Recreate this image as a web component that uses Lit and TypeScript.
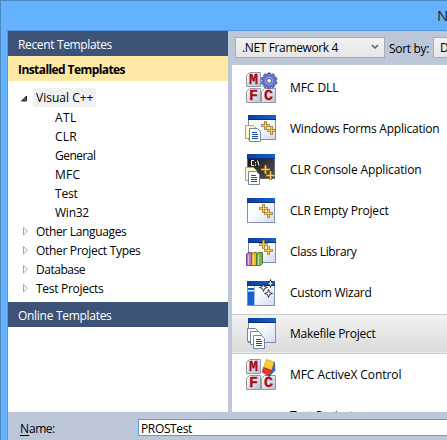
import { LitElement, html, css, svg } from "lit";
import { customElement, property } from "lit/decorators.js";
import { classMap } from "lit/directives/class-map.js";

const sparkle = (x: number, y: number) => svg`
  <path d="M${x} ${y - 4.5}v9M${x - 4.5} ${y}h9" stroke="#96701f" stroke-width="2.6"/>
  <path d="M${x} ${y - 4}v8M${x - 4} ${y}h8" stroke="#fbcb55" stroke-width="1.2"/>`;

const star = (x: number, y: number) => svg`
  <path d="M${x} ${y - 4}l1 3l3 1l-3 1l-1 3l-1-3l-3-1l3-1z" fill="#fff" stroke="#202834" stroke-width=".9"/>`;

const windowFrame = (x: number, y: number, dark = false) => svg`
  <rect x="${x + 0.5}" y="${y + 0.5}" width="27" height="24" fill=${dark ? "url(#night)" : "url(#pane)"} stroke=${dark ? "#666a70" : "#8090ad"}/>
  <rect x=${x} y=${y} width="28" height="5" fill="url(#bar)"/>
  <rect x=${x} y="${y + 4}" width="28" height="1" fill="#0a2f7c"/>`;

const page = (x: number, y: number, lines: boolean, fill = "#fff", edge = "#7486a8") => svg`
  <path d="M${x + 0.5} ${y + 0.5}h8l3 3v10h-11z" fill=${fill} stroke=${edge}/>
  ${lines ? svg`<path d="M${x + 3} ${y + 4.5}h5M${x + 3} ${y + 6.5}h6M${x + 3} ${y + 8.5}h6M${x + 3} ${y + 10.5}h6" stroke="#1b4ea8"/>` : ""}`;

const block = (x: number, y: number, t: string) => svg`
  <path d="M${x + 0.5} ${y + 3.5}l3-3h11v14h-14z" fill="url(#cube)" stroke="#9299a6"/>
  <text x="${x + 7.5}" y="${y + 12}" text-anchor="middle" class="cube-letter">${t}</text>`;

const blocks = svg`${block(1, 0, "M")}${block(1, 16, "F")}${block(16, 16, "C")}`;
const gearTeeth = [0, 36, 72, 108, 144];

const pictures: Record<string, unknown> = {
  dll: svg`${blocks}
    ${gearTeeth.map((a) => svg`<rect x="22.500" y="0.800" width="3.200" height="16" rx=".8" fill="#6474c6" stroke="#424f96" stroke-width=".7" transform="rotate(${a} 24.100 8.800)"/>`)}
    <circle cx="24.100" cy="8.800" r="6" fill="#6474c6"/>
    <circle cx="24.100" cy="8.800" r="4.300" fill="#8796de"/>
    <circle cx="24.100" cy="8.800" r="2.300" fill="#fff" stroke="#424f96" stroke-width=".9"/>`,
  forms: svg`${windowFrame(3, 2)}${page(0, 12, false, "#fff6cc", "#b5a96c")}${page(4, 15, true)}${sparkle(20.5, 12.5)}${sparkle(26.5, 17.5)}`,
  console: svg`${windowFrame(2, 0, true)}
    <path d="M9 6.500H6.500V11.500H9M10.500 8v1.200M10.500 10.500v1.200M12.500 6.500l1.500 5" fill="none" stroke="#fff"/>
    ${page(0, 13, false, "#fff6cc", "#b5a96c")}${page(3, 17, true)}${sparkle(20.5, 15.5)}${sparkle(25.5, 21.5)}`,
  empty: svg`${windowFrame(2, 3)}${sparkle(18.5, 13.5)}${sparkle(23.5, 18.5)}`,
  library: svg`${windowFrame(3, 2)}${sparkle(18.5, 8.5)}${sparkle(23.5, 14.5)}
    <path d="M1.500 18l2-1.500h3v13h-5z" fill="#bd74c8" stroke="#7b4386"/>
    <path d="M6.500 18l2-1.500h3v13h-5z" fill="#e8b52e" stroke="#8b6b1d"/>
    <path d="M11.500 18l2-1.500h4v11l-2 2h-4z" fill="#7db84a" stroke="#4c7a2a"/>
    <path d="M3.500 19v10M8.500 19v10M13.500 19v10" stroke="#fff" opacity=".55"/>`,
  wizard: svg`${windowFrame(2, 4)}<path d="M3 11h6v2H3zM3 14.500h6V28H3z" fill="#1263d2"/>
    <path d="M9.500 9v19" stroke="#a9bbdc"/>${star(18.5, 10.5)}${star(23.5, 16.5)}${star(25.5, 6.5)}`,
  makefile: svg`${windowFrame(3, 0)}${page(2, 10, false)}${page(5, 13, false)}${page(8, 17, true)}`,
  activex: svg`${blocks}
    <path d="M21.500 0.500L29.500 3L27 11.500L18.500 8.500z" fill="#ffce2e" stroke="#b98c12" stroke-width=".6"/>
    <path d="M18.500 8.500L27 11.500L24 17.500L17 13z" fill="#e03a2c" stroke="#962018" stroke-width=".6"/>
    <path d="M29.500 3L30 11.500L24 17.500L27 11.500z" fill="#3f67cf" stroke="#213f94" stroke-width=".6"/>`,
};

@customElement("template-icon")
export class TemplateIcon extends LitElement {
  @property() kind = "";
  static styles = css`
    :host { display: block; flex: none; width: 34px; height: 32px; }
    svg { display: block; overflow: visible; }
    .cube-letter { font: bold 15px "Liberation Mono", monospace; fill: #a80c1a; stroke: #a80c1a; stroke-width: 0.3px; }
  `;
  render() {
    return html`<svg width="34" height="32" viewBox="0 0 34 32">
      <defs>
        <linearGradient id="pane" x2="1" y2="1"><stop stop-color="#fff"/><stop offset=".5" stop-color="#f8fafe"/><stop offset="1" stop-color="#cfdaf0"/></linearGradient>
        <linearGradient id="night" x2="1" y2="1"><stop stop-color="#111"/><stop offset="1" stop-color="#555"/></linearGradient>
        <linearGradient id="bar"><stop stop-color="#0a3d9c"/><stop offset="1" stop-color="#1660d0"/></linearGradient>
        <linearGradient id="cube" x2="1" y2="1"><stop stop-color="#fff"/><stop offset=".4" stop-color="#e4e7ec"/><stop offset="1" stop-color="#b9c0cc"/></linearGradient>
      </defs>${pictures[this.kind]}</svg>`;
  }
}

/** A single line of text, tracked so that it fills the given width. */
@customElement("fit-text")
export class FitText extends LitElement {
  @property() text = "";
  @property({ type: Number }) width = 0;
  static styles = css`
    :host { display: block; white-space: nowrap; }
    span { display: inline-block; }
  `;
  render() {
    return html`<span>${this.text}</span>`;
  }
  firstUpdated() {
    const span = this.renderRoot.querySelector("span")!;
    if (this.width > 0) {
      const spare = this.width - span.getBoundingClientRect().width;
      span.style.letterSpacing = `${spare / this.text.length}px`;
    }
  }
}

const label = (text: string, width: number) => html`<fit-text text=${text} width=${width}></fit-text>`;

const languages: [string, number][] = [["ATL", 21.5], ["CLR", 22], ["General", 40.5], ["MFC", 25.5], ["Test", 22.5], ["Win32", 34]];
const groups: [string, number][] = [["Other Languages", 90.5], ["Other Project Types", 104.5], ["Database", 49], ["Test Projects", 67.5]];
const templates: [string, string, number][] = [
  ["dll", "MFC DLL", 48.5],
  ["forms", "Windows Forms Application", 149.5],
  ["console", "CLR Console Application", 131.5],
  ["empty", "CLR Empty Project", 98.5],
  ["library", "Class Library", 66.5],
  ["wizard", "Custom Wizard", 81.5],
  ["makefile", "Makefile Project", 85.5],
  ["activex", "MFC ActiveX Control", 111.5],
  ["", "Test Project", 64],
];

@customElement("app-root")
export class AppRoot extends LitElement {
  static styles = css`
    :host { display: block; width: 447px; height: 440px; overflow: hidden; font: 12px/18px "Open Sans", "Noto Sans", sans-serif; color: #000; }
    * { box-sizing: border-box; }
    .window { width: 447px; height: 440px; display: flex; flex-direction: column; background: #64b2fd; border: solid #4c88c2; border-width: 1px 0 0 1px; }
    .title { height: 29px; flex: none; display: flex; justify-content: flex-end; align-items: center; padding-bottom: 2px; font-size: 15px; color: #222; overflow: hidden; }
    .title span { width: 10px; white-space: nowrap; }
    .frame { flex: 1; margin-left: 6px; border: solid #5595dc; border-width: 1px 0 0 1px; background: #bcc7d8; display: flex; flex-direction: column; min-height: 0; }
    .columns { height: 381px; flex: none; display: flex; gap: 4px; }
    .tree { width: 220px; flex: none; background: #fff; }
    .head { height: 25px; padding: 5px 0 0 10px; background: #3d5277; color: #fff; }
    .head.open { background: #ffe8a6; color: #000; font-weight: bold; }
    .nodes { padding: 7px 0 5px; }
    .node { height: 19px; display: flex; align-items: center; padding-left: 12px; }
    .node fit-text { padding-top: 2px; }
    .node.leaf { padding-left: 47px; }
    .arrow { width: 16px; flex: none; height: 10px; }
    .root { background: #f0f0f0; height: 19px; padding: 0 2px 0 3px; margin-left: -3px; width: 63px; }
    .root fit-text { padding-top: 1px; }
    .main { flex: 1; min-width: 0; display: flex; flex-direction: column; }
    .tools { height: 34px; flex: none; display: flex; align-items: flex-start; padding: 6px 0 0 3px; overflow: hidden; }
    .combo { height: 21px; width: 150px; flex: none; border: 1px solid #acacac; background: linear-gradient(#f2f2f2, #e6e6e6); display: flex; justify-content: space-between; align-items: center; padding: 1px 5px 0 6px; }
    .combo svg { margin-bottom: 2px; }
    .sort { margin: 3px 5px 0 4px; width: 39px; flex: none; }
    .list { flex: 1; min-height: 0; background: #fff; overflow: hidden; padding-top: 3px; display: flex; flex-direction: column; gap: 1px; }
    .item { height: 40px; flex: none; display: flex; align-items: center; gap: 11px; padding-left: 13px; }
    .item.chosen { background: linear-gradient(#f2f2f2, #dadada); box-shadow: inset 0 1px #cbcbcb, inset 0 -1px #cbcbcb, inset 0 -2px #ececec; }
    .foot { flex: 1; display: flex; align-items: flex-start; padding: 7px 0 0 12px; }
    .field-name { width: 118px; flex: none; display: flex; padding-top: 1px; }
    .key { text-decoration: underline; text-underline-offset: 2px; }
    .input { flex: 1; height: 17px; background: #fff; border: 1px solid #569de5; border-right: 0; padding-left: 2px; line-height: 17px; }
  `;
  render() {
    return html`<div class="window">
      <div class="title"><span>New Project</span></div>
      <div class="frame">
        <div class="columns">
          <div class="tree">
            <div class="head">${label("Recent Templates", 94)}</div>
            <div class="head open">${label("Installed Templates", 107)}</div>
            <div class="nodes">
              <div class="node">
                <svg class="arrow" width="16" height="10"><path d="M1.500 8H6.500V3z" fill="#595959" stroke="#262626"/></svg>
                <div class="root">${label("Visual C++", 57.5)}</div>
              </div>
              ${languages.map(([t, w]) => html`<div class="node leaf">${label(t, w)}</div>`)}
              ${groups.map(([t, w]) => html`<div class="node">
                <svg class="arrow" width="16" height="10"><path d="M3.500 1.500V9L7.300 5.250z" fill="#fff" stroke="#a6a6a6"/></svg>
                ${label(t, w)}</div>`)}
            </div>
            <div class="head">${label("Online Templates", 93.5)}</div>
          </div>
          <div class="main">
            <div class="tools">
              <div class="combo">${label(".NET Framework 4", 96)}
                <svg width="8" height="6"><path d="M1 1L4 4L7 1" fill="none" stroke="#606060" stroke-width="1.500"/></svg>
              </div>
              <div class="sort">${label("Sort by:", 40)}</div>
              <div class="combo">${label("Default", 40)}</div>
            </div>
            <div class="list">
              ${templates.map(([k, t, w]) => html`<div class=${classMap({ item: true, chosen: k === "makefile" })}>
                <template-icon kind=${k}></template-icon>${label(t, w)}</div>`)}
            </div>
          </div>
        </div>
        <div class="foot">
          <div class="field-name"><span class="key">N</span>${label("ame:", 25.5)}</div>
          <div class="input">${label("PROSTest", 51)}</div>
        </div>
      </div>
    </div>`;
  }
}
